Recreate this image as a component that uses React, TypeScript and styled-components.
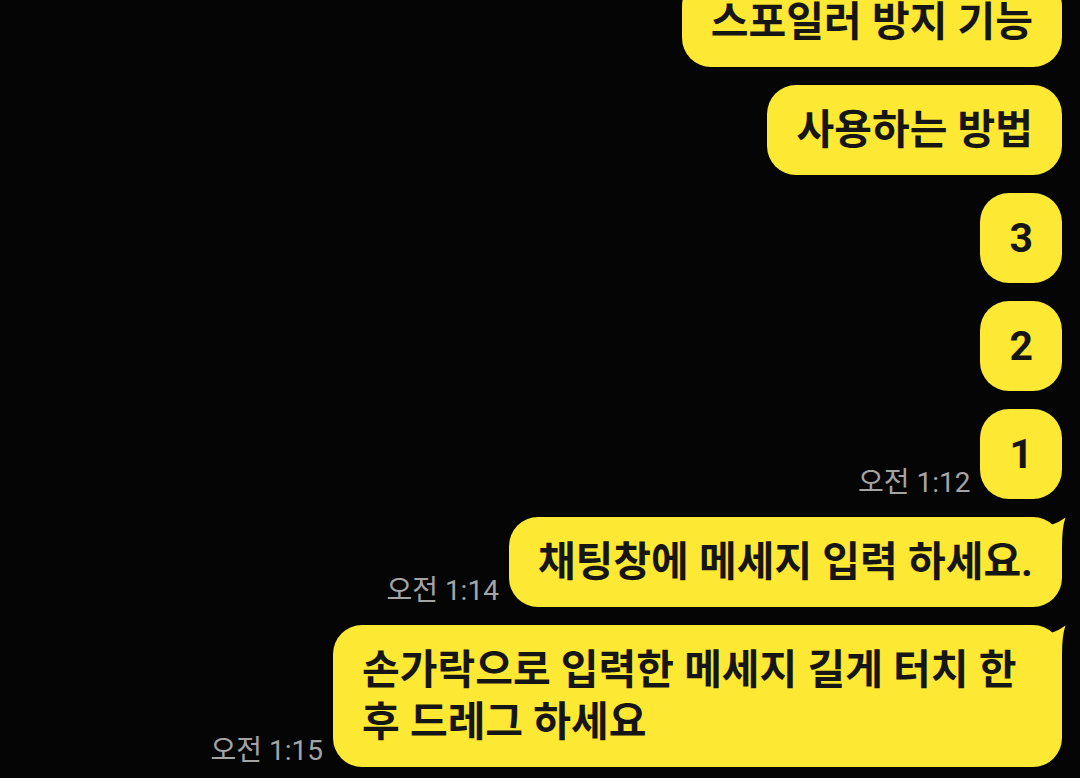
import React from "react";
import styled, { createGlobalStyle } from "styled-components";

const GlobalStyle = createGlobalStyle`
  html, body {
    margin: 0;
    padding: 0;
    background: #050505;
    height: 100%;
  }
  #root { height: 100%; }
`;

const Viewport = styled.div`
  height: 100vh;
  overflow: hidden;
  display: flex;
  flex-direction: column;
  justify-content: flex-end;
  gap: 18px;
  padding: 0 18px 11px 0;
  box-sizing: border-box;
  background: #050505;
`;

const Row = styled.div`
  display: flex;
  justify-content: flex-end;
  align-items: flex-end;
  gap: 10px;
  flex-shrink: 0;
`;

const Time = styled.span`
  font-family: "Roboto", "Noto Sans CJK KR", sans-serif;
  font-size: 28px;
  line-height: 28px;
  color: #a4a4a4;
  white-space: nowrap;
  margin-bottom: 2px;
`;

const Bubble = styled.div`
  position: relative;
  background: #fde834;
  color: #161616;
  font-family: "Roboto", "Noto Sans CJK KR", sans-serif;
  font-weight: 700;
  font-size: 41px;
  line-height: 52px;
  padding: 19px 29px;
  border-radius: 29px;
  max-width: 671px;
  word-break: keep-all;
`;

const Tail = styled.svg`
  position: absolute;
  top: 0;
  right: -4px;
  width: 24px;
  height: 30px;
`;

const BubbleTail = () => (
  <Tail viewBox="0 0 24 30">
    <path d="M9 8 Q17 5.5 23.5 0.5 Q20 10 20 30 L9 30 Z" fill="#fde834" />
  </Tail>
);

type Msg = { text: string; time?: string; tail?: boolean };

const messages: Msg[] = [
  { text: "스포일러 방지 기능" },
  { text: "사용하는 방법" },
  { text: "3" },
  { text: "2" },
  { text: "1", time: "오전 1:12" },
  { text: "채팅창에 메세지 입력 하세요.", time: "오전 1:14", tail: true },
  { text: "손가락으로 입력한 메세지 길게 터치 한 후 드레그 하세요", time: "오전 1:15", tail: true },
];

export default function App() {
  return (
    <>
      <GlobalStyle />
      <Viewport>
        {messages.map((m, i) => (
          <Row key={i}>
            {m.time && <Time>{m.time}</Time>}
            <Bubble>
              {m.tail && <BubbleTail />}
              {m.text}
            </Bubble>
          </Row>
        ))}
      </Viewport>
    </>
  );
}
